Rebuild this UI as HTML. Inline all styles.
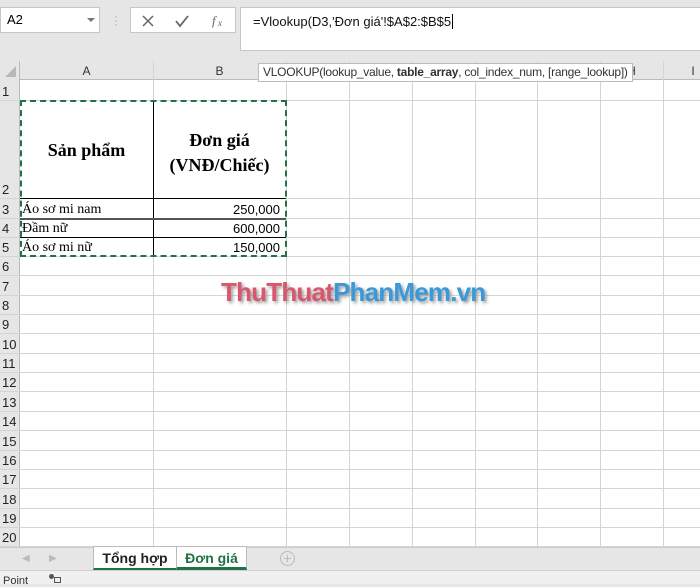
<!DOCTYPE html><html><head><meta charset="utf-8"><style>
*{margin:0;padding:0;box-sizing:border-box}
body{width:700px;height:584px;overflow:hidden;background:#e6e6e6;font-family:"Liberation Sans",sans-serif;position:relative}
.a{position:absolute}
.vl{position:absolute;width:1px;background:#d4d4d4}
.hl{position:absolute;height:1px;background:#d4d4d4}
.rn{position:absolute;left:0;width:20px;font-size:13px;color:#222;padding-left:2px;line-height:1}
.ch{position:absolute;top:62px;height:18px;font-size:12px;color:#333;text-align:center;line-height:18px}
.serif{font-family:"Liberation Serif",serif}
</style></head><body>
<div class="a" style="left:0;top:7px;width:100px;height:26px;background:#fff;border:1px solid #c6c6c6;font-size:13px;line-height:24px;padding-left:6px">A2<span class="a" style="left:86px;top:10px;border-left:4px solid transparent;border-right:4px solid transparent;border-top:4px solid #777"></span></div>
<div class="a" style="left:114px;top:14px;color:#aaa;font-size:12px;line-height:4px">·<br>·<br>·</div>
<div class="a" style="left:130px;top:7px;width:106px;height:26px;background:#fff;border:1px solid #c6c6c6"></div>
<svg class="a" style="left:140px;top:13px" width="90" height="16"><path d="M3 3l10 10M13 3L3 13" stroke="#666" stroke-width="1.5"/><path d="M36 8l4 5 8-10" stroke="#666" stroke-width="1.8" fill="none"/><text x="72" y="12" font-family="Liberation Serif" font-style="italic" font-size="13" fill="#666">f</text><text x="78" y="13" font-family="Liberation Serif" font-style="italic" font-size="9" fill="#666">x</text></svg>
<div class="a" style="left:240px;top:7px;width:470px;height:44px;background:#fff;border:1px solid #c6c6c6;font-size:13px;padding:6px 0 0 12px;color:#111">=Vlookup(D3,'Đơn giá'!$A$2:$B$5<span style="border-left:1px solid #000;margin-left:1px"></span></div>
<div class="a" style="left:0;top:61px;width:700px;height:486px;background:#fff"></div>
<div class="a" style="left:0;top:61px;width:700px;height:19px;background:#e6e6e6;border-bottom:1px solid #bbb"></div>
<div class="a" style="left:0;top:61px;width:20px;height:486px;background:#e6e6e6;border-right:1px solid #bbb"></div>
<div class="a" style="left:5px;top:66px;width:0;height:0;border-left:11px solid transparent;border-bottom:11px solid #b8b8b8"></div>
<div class="ch" style="left:20px;width:133px">A</div><div class="ch" style="left:153px;width:133px">B</div>
<div class="ch" style="left:600px;width:63px">H</div>
<div class="ch" style="left:663px;width:60px">I</div>
<div id="g"></div>
<div class="a" style="left:258px;top:63px;width:375px;height:19px;background:#fff;border:1px solid #bbb;font-size:12px;line-height:17px;padding-left:4px;color:#333;white-space:nowrap;letter-spacing:-0.25px">VLOOKUP(lookup_value, <b>table_array</b>, col_index_num, [range_lookup])</div>
<div class="a serif" style="left:20px;top:140px;width:133px;text-align:center;font-weight:bold;font-size:18px">Sản phẩm</div>
<div class="a serif" style="left:153px;top:128px;width:133px;text-align:center;font-weight:bold;font-size:18px;line-height:25px">Đơn giá<br>(VNĐ/Chiếc)</div>
<div class="a serif" style="left:22px;top:202px;font-size:14px">Áo sơ mi nam</div>
<div class="a serif" style="left:22px;top:221px;font-size:14px">Đầm nữ</div>
<div class="a serif" style="left:22px;top:240px;font-size:14px">Áo sơ mi nữ</div>
<div class="a" style="left:153px;top:201px;width:127px;text-align:right;font-size:13px;line-height:18px">250,000</div>
<div class="a" style="left:153px;top:220px;width:127px;text-align:right;font-size:13px;line-height:18px">600,000</div>
<div class="a" style="left:153px;top:239px;width:127px;text-align:right;font-size:13px;line-height:18px">150,000</div>
<div class="a" style="left:153px;top:100px;width:1px;height:156px;background:#000"></div>
<div class="a" style="left:20px;top:198px;width:266px;height:1px;background:#000"></div>
<div class="a" style="left:20px;top:218px;width:266px;height:2px;background:#555"></div>
<div class="a" style="left:20px;top:237px;width:266px;height:1px;background:#000"></div>
<div class="a" style="left:20px;top:100px;width:267px;height:157px;border:2px dashed #217346"></div>
<div class="a" style="left:221px;top:277px;font-size:26px;font-weight:bold;letter-spacing:-0.8px;text-shadow:2px 2px 3px #999;white-space:nowrap"><span style="color:#d9566c">ThuThuat</span><span style="color:#3a9ad9">PhanMem</span><span style="color:#3a9ad9">.vn</span></div>
<div class="a" style="left:0;top:547px;width:700px;height:23px;background:#e6e6e6;border-top:1px solid #ccc"></div>
<div class="a" style="left:22px;top:553px;color:#bbb;font-size:10px">◀</div><div class="a" style="left:49px;top:553px;color:#bbb;font-size:10px">▶</div>
<div class="a" style="left:93px;top:546px;width:84px;height:24px;background:#fff;border:1px solid #bbb;border-bottom:2px solid #217346;font-weight:bold;font-size:14px;text-align:center;line-height:22px;color:#222">Tổng hợp</div>
<div class="a" style="left:176px;top:546px;width:71px;height:24px;background:#fff;border:1px solid #bbb;border-bottom:3px solid #217346;font-weight:bold;font-size:14px;text-align:center;line-height:22px;color:#217346">Đơn giá</div>
<div class="a" style="left:280px;top:551px;width:15px;height:15px;border:1px solid #bbb;border-radius:50%;color:#bbb;font-size:14px;line-height:12px;text-align:center">+</div>
<div class="a" style="left:0;top:570px;width:700px;height:14px;background:#f0f0f0;border-top:1px solid #d0d0d0"></div>
<div class="a" style="left:3px;top:575px;font-size:11px;color:#333">Point</div>
<div class="a" style="left:49px;top:574px;width:5px;height:5px;background:#555;border-radius:50%"></div>
<div class="a" style="left:54px;top:577px;width:7px;height:6px;border:1px solid #555"></div>
<script>
var g=document.getElementById('g'),h='';
var cols=[153,286,349,412,475,537,600,663];
cols.forEach(function(x){h+='<div class="vl" style="left:'+x+'px;top:61px;height:486px"></div>';});
var tops=[80,100,198,218,237,256];for(var i=1;i<=15;i++)tops.push(256+i*19.35);
for(var r=0;r<20;r++){var b=tops[r+1];h+='<div class="hl" style="left:0;top:'+Math.round(b)+'px;width:700px"></div>';
h+='<div class="rn" style="top:'+Math.round(b-15)+'px">'+(r+1)+'</div>';}
g.innerHTML=h;
</script>
</body></html>
